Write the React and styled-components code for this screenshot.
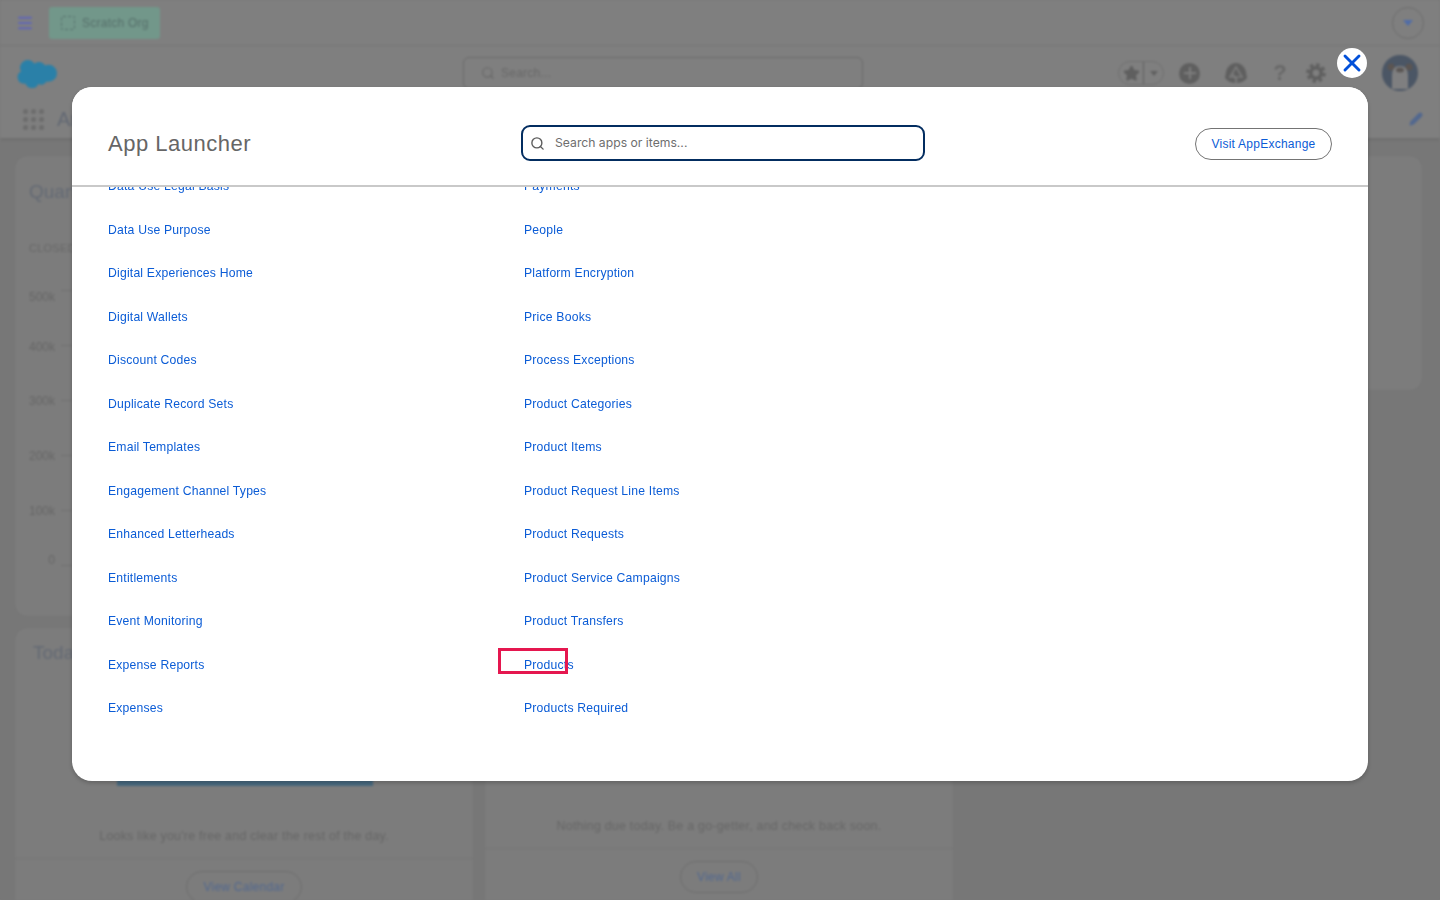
import styled, { createGlobalStyle } from "styled-components";
import { Menu, Search, Star, Plus, Pencil, X } from "lucide-react";

const leftItems = [
    "Data Use Legal Basis",
    "Data Use Purpose",
    "Digital Experiences Home",
    "Digital Wallets",
    "Discount Codes",
    "Duplicate Record Sets",
    "Email Templates",
    "Engagement Channel Types",
    "Enhanced Letterheads",
    "Entitlements",
    "Event Monitoring",
    "Expense Reports",
    "Expenses",
];

const rightItems = [
    "Payments",
    "People",
    "Platform Encryption",
    "Price Books",
    "Process Exceptions",
    "Product Categories",
    "Product Items",
    "Product Request Line Items",
    "Product Requests",
    "Product Service Campaigns",
    "Product Transfers",
    "Products",
    "Products Required",
];

const ticks = [
    { label: "500k", shift: 6 },
    { label: "400k", shift: 1 },
    { label: "300k", shift: 0 },
    { label: "200k", shift: 0 },
    { label: "100k", shift: 0 },
    { label: "0", shift: -6 },
];

const Cloud = () => (
    <svg width="41" height="30" viewBox="0 0 41 30">
        <path
            fill="#2a80a8"
            d="M17 6a7 7 0 0 1 5-2 7 7 0 0 1 6 3.500a8 8 0 0 1 3.500-.8 8.500 8.500 0 0 1 0 17 8 8 0 0 1-2-.2 6 6 0 0 1-8 2.500 7 7 0 0 1-13-.5 6 6 0 0 1-1.500.2 6.500 6.500 0 0 1-3-12.200 7.500 7.500 0 0 1 13.500-7.500z"
        />
    </svg>
);

const Trailhead = () => (
    <svg width="24" height="22" viewBox="0 0 24 22">
        <path fill="#5f5f5f" d="M12 1 C17 1 21 5 22 10 L23 16 C20 20 16 21 12 21 C8 21 4 20 1 16 L2 10 C3 5 7 1 12 1Z" />
        <path fill="none" stroke="#7c7c7c" strokeWidth="1.600" d="M12 5 L18 15 L6 15 Z M12 15 L12 21 M8 11 L13 19" />
    </svg>
);

const Gear = () => (
    <svg width="20" height="20" viewBox="0 0 20 20">
        <circle cx="10" cy="10" r="8.300" fill="none" stroke="#5f5f5f" strokeWidth="3" strokeDasharray="3.500 3" />
        <circle cx="10" cy="10" r="5.200" fill="none" stroke="#5f5f5f" strokeWidth="3.600" />
    </svg>
);

const Bear = () => (
    <svg width="36" height="36" viewBox="0 0 36 36">
        <circle cx="18" cy="18" r="18" fill="#4b5665" />
        <circle cx="9" cy="12" r="3.500" fill="#5b5552" />
        <circle cx="27" cy="12" r="3.500" fill="#5b5552" />
        <path fill="#7f7f80" d="M10 34 V21 C10 14 13 11 18 11 C23 11 26 14 26 21 V34Z" />
        <ellipse cx="18" cy="15" rx="4" ry="2.500" fill="#5a5654" />
    </svg>
);

const App = () => {
    return (
        <>
            <GlobalStyle />
            <Page>
                <TopBar>
                    <MenuButton><Menu size={18} strokeWidth={2.500} /></MenuButton>
                    <OrgPill>
                        <OrgMark />
                        Scratch Org
                    </OrgPill>
                    <CaretCircle><CaretDown /></CaretCircle>
                </TopBar>
                <GlobalHeader>
                    <LogoSlot><Cloud /></LogoSlot>
                    <PageSearch>
                        <Search size={14} />
                        Search...
                    </PageSearch>
                    <HeaderTools>
                        <FavoriteGroup>
                            <FavoriteStar><Star size={17} fill="#5f5f5f" /></FavoriteStar>
                            <FavoriteCaret><CaretSmall /></FavoriteCaret>
                        </FavoriteGroup>
                        <AddCircle><Plus size={18} strokeWidth={3} /></AddCircle>
                        <Trailhead />
                        <HelpGlyph>?</HelpGlyph>
                        <GearSlot><Gear /></GearSlot>
                        <Avatar><Bear /></Avatar>
                    </HeaderTools>
                </GlobalHeader>
                <NavRow>
                    <Waffle>
                        {Array.from({ length: 9 }, (_, i) => <Dot key={i} />)}
                    </Waffle>
                    <NavTitle>Analytics</NavTitle>
                    <EditButton><Pencil size={14} fill="#52688f" /></EditButton>
                </NavRow>
                <Board>
                    <LeftStack>
                        <ChartCard>
                            <CardTitle>Quarterly Performance</CardTitle>
                            <ChartCaption>CLOSED</ChartCaption>
                            <Chart>
                                {ticks.map((t) => (
                                    <ChartRow key={t.label}>
                                        <ChartLabel $shift={t.shift}>{t.label}</ChartLabel>
                                        <ChartTick />
                                    </ChartRow>
                                ))}
                            </Chart>
                        </ChartCard>
                        <TodayRow>
                            <TodayCard $width={458}>
                                <TodayTitle>Today's Events</TodayTitle>
                                <Art>
                                    <EventBar />
                                </Art>
                                <EmptyText $gap={43}>Looks like you're free and clear the rest of the day.</EmptyText>
                                <CardFoot><FootButton>View Calendar</FootButton></CardFoot>
                            </TodayCard>
                            <TodayCard $width={468}>
                                <TodayTitle>Today's Tasks</TodayTitle>
                                <Art />
                                <EmptyText $gap={33}>Nothing due today. Be a go-getter, and check back soon.</EmptyText>
                                <CardFoot><FootButton>View All</FootButton></CardFoot>
                            </TodayCard>
                        </TodayRow>
                    </LeftStack>
                    <SideCard />
                </Board>
            </Page>
            <Scrim>
                <Modal>
                    <CloseButton aria-label="Close">
                        <X size={28} strokeWidth={2.500} />
                    </CloseButton>
                    <ModalHeader>
                        <ModalTitle>App Launcher</ModalTitle>
                        <LauncherSearch>
                            <Search size={15} strokeWidth={2.200} />
                            <LauncherInput placeholder="Search apps or items..." />
                        </LauncherSearch>
                        <ExchangeButton>Visit AppExchange</ExchangeButton>
                    </ModalHeader>
                    <ModalBody>
                        <ItemGrid>
                            <ItemColumn>
                                {leftItems.map((item) => <ItemLink key={item}>{item}</ItemLink>)}
                            </ItemColumn>
                            <ItemColumn>
                                {rightItems.map((item) => <ItemLink key={item}>{item}</ItemLink>)}
                            </ItemColumn>
                        </ItemGrid>
                    </ModalBody>
                    <Highlight />
                </Modal>
            </Scrim>
        </>
    );
};

export default App;

const GlobalStyle = createGlobalStyle`
    html, body {
        margin: 0;
        height: 100%;
        overflow: hidden;
        background: #787878;
    }
    body, input, button {
        font-family: "Liberation Sans", Arial, sans-serif;
    }
    * {
        box-sizing: border-box;
    }
`;

/* the dimmed app behind the launcher, colours as they read through the scrim */
const Page = styled.div`
    width: 1440px;
    height: 900px;
    overflow: hidden;
    background: #777777;
    filter: blur(1.2px);
    color: #666;
`;

const TopBar = styled.div`
    height: 46px;
    display: flex;
    align-items: center;
    padding: 1px 16px 0;
    background: #7f7f7f;
    border-bottom: 1px solid #757575;
`;

const MenuButton = styled.div`
    display: flex;
    color: #6066b8;
`;

const OrgPill = styled.div`
    margin-left: 15px;
    width: 111px;
    height: 32px;
    display: flex;
    align-items: center;
    gap: 7px;
    padding-left: 12px;
    background: #72978a;
    border-radius: 3px;
    font-size: 12px;
    letter-spacing: 0.25px;
    color: #566f6a;
`;

const OrgMark = styled.span`
    width: 14px;
    height: 14px;
    border: 1.5px dashed #55706c;
    border-radius: 2px;
`;

const CaretCircle = styled.div`
    margin-left: auto;
    width: 32px;
    height: 32px;
    display: flex;
    align-items: center;
    justify-content: center;
    border: 1px solid #6d6d6d;
    border-radius: 50%;
`;

const CaretDown = styled.span`
    border-left: 5px solid transparent;
    border-right: 5px solid transparent;
    border-top: 6px solid #4f6ca8;
`;

const GlobalHeader = styled.div`
    height: 54px;
    display: flex;
    align-items: center;
    padding: 0 22px 0 17px;
    background: #7f7f7f;
`;

const LogoSlot = styled.div`
    width: 446px;
    display: flex;
`;

const PageSearch = styled.div`
    width: 400px;
    height: 32px;
    display: flex;
    align-items: center;
    gap: 6px;
    padding-left: 17px;
    border: 1px solid #6a6a6a;
    border-radius: 6px;
    background: #7f7f7f;
    font-size: 12px;
    letter-spacing: 0.25px;
    color: #686868;
`;

const HeaderTools = styled.div`
    margin-left: auto;
    display: flex;
    align-items: center;
    color: #5f5f5f;
`;

const FavoriteGroup = styled.div`
    display: flex;
    align-items: center;
    height: 24px;
    width: 46px;
    margin-right: 15px;
    border: 1px solid #707070;
    border-radius: 12px;
`;

const FavoriteStar = styled.div`
    width: 24px;
    display: flex;
    justify-content: center;
`;

const FavoriteCaret = styled.div`
    flex: 1;
    height: 100%;
    display: flex;
    align-items: center;
    justify-content: center;
    border-left: 1px solid #5f5f5f;
`;

const CaretSmall = styled.span`
    border-left: 4px solid transparent;
    border-right: 4px solid transparent;
    border-top: 5px solid #5f5f5f;
`;

const AddCircle = styled.div`
    width: 21px;
    height: 21px;
    margin-right: 24px;
    display: flex;
    align-items: center;
    justify-content: center;
    border-radius: 50%;
    background: #5f5f5f;
    color: #7c7c7c;
`;

const HelpGlyph = styled.div`
    margin-left: 22px;
    width: 20px;
    text-align: center;
    font-size: 22px;
    font-weight: bold;
    color: #686868;
`;

const GearSlot = styled.div`
    display: flex;
    margin-left: 16px;
`;

const Avatar = styled.div`
    display: flex;
    margin-left: 56px;
`;

const NavRow = styled.div`
    height: 38px;
    display: flex;
    align-items: center;
    padding: 0 17px 0 23px;
    background: #7f7f7f;
    box-shadow: 0 2px 3px rgba(0, 0, 0, 0.08);
`;

const Waffle = styled.div`
    display: grid;
    grid-template-columns: repeat(3, 5px);
    gap: 3px;
`;

const Dot = styled.span`
    width: 5px;
    height: 5px;
    border-radius: 50%;
    background: #6c6c6c;
`;

const NavTitle = styled.div`
    margin-left: 13px;
    font-size: 20px;
    color: #626873;
`;

const EditButton = styled.div`
    margin-left: auto;
    display: flex;
    color: #52688f;
`;

const Board = styled.div`
    display: flex;
    align-items: flex-start;
    gap: 20px;
    padding: 18px 18px 0 15px;
`;

const LeftStack = styled.div`
    width: 938px;
    display: flex;
    flex-direction: column;
    gap: 12px;
`;

const Card = styled.div`
    background: #7c7c7c;
    border-radius: 12px;
    box-shadow: 0 0 2px rgba(0, 0, 0, 0.06);
`;

const ChartCard = styled(Card)`
    height: 460px;
    padding: 25px 14px;
`;

const SideCard = styled(Card)`
    flex: 1;
    height: 234px;
`;

const CardTitle = styled.div`
    font-size: 19px;
    color: #646a74;
`;

const ChartCaption = styled.div`
    margin-top: 39px;
    font-size: 11px;
    letter-spacing: 0.25px;
    color: #676767;
`;

const Chart = styled.div`
    margin-top: 9px;
`;

const ChartRow = styled.div`
    height: 55px;
    display: flex;
    align-items: center;
    gap: 6px;
`;

const ChartLabel = styled.div`
    width: 26px;
    text-align: right;
    font-size: 12px;
    color: #666666;
    transform: translateY(${(p) => p.$shift}px);
`;

const ChartTick = styled.span`
    width: 60px;
    height: 1px;
    background: #6f6f6f;
`;

const TodayRow = styled.div`
    display: flex;
    gap: 12px;
`;

const TodayCard = styled(Card)`
    flex: none;
    width: ${(p) => p.$width}px;
    height: 300px;
    display: flex;
    flex-direction: column;
    padding-top: 14px;
    text-align: center;
`;

const TodayTitle = styled.div`
    padding-left: 18px;
    text-align: left;
    font-size: 19px;
    color: #646a74;
`;

const Art = styled.div`
    height: 122px;
    display: flex;
    align-items: flex-end;
    justify-content: center;
`;

const EventBar = styled.div`
    width: 256px;
    height: 7px;
    margin-left: 2px;
    background: #47687e;
`;

const EmptyText = styled.div`
    margin-top: ${(p) => p.$gap}px;
    font-size: 12.4px;
    letter-spacing: 0.25px;
    color: #666666;
`;

const CardFoot = styled.div`
    margin-top: 15px;
    padding-top: 12px;
    border-top: 1px solid #757575;
`;

const FootButton = styled.span`
    display: inline-block;
    padding: 8px 16px;
    border: 1px solid #6e6e6e;
    border-radius: 16px;
    font-size: 12px;
    letter-spacing: 0.25px;
    color: #52688f;
`;

const Scrim = styled.div`
    position: fixed;
    inset: 0;
`;

const Modal = styled.div`
    position: absolute;
    left: 72px;
    top: 87px;
    width: 1296px;
    height: 694px;
    display: flex;
    flex-direction: column;
    background: #fff;
    border-radius: 20px;
    box-shadow: 0 2px 4px rgba(0, 0, 0, 0.2);
`;

const CloseButton = styled.button`
    position: absolute;
    top: -39px;
    right: 1px;
    width: 30px;
    height: 30px;
    padding: 0;
    display: flex;
    align-items: center;
    justify-content: center;
    border: none;
    border-radius: 50%;
    background: #fff;
    color: #0250d9;
`;

const ModalHeader = styled.div`
    height: 100px;
    flex: none;
    display: flex;
    align-items: center;
    padding: 15px 36px 0;
    border-bottom: 2px solid #c9c9c9;
    position: relative;
    z-index: 1;
    background: #fff;
    border-radius: 20px 20px 0 0;
`;

const ModalTitle = styled.h2`
    width: 413px;
    margin: 0;
    font-size: 22px;
    font-weight: 400;
    letter-spacing: 0.5px;
    color: #666666;
`;

const LauncherSearch = styled.div`
    width: 404px;
    height: 36px;
    margin-top: -1px;
    display: flex;
    align-items: center;
    gap: 10px;
    padding-left: 7px;
    border: 2px solid #032d60;
    border-radius: 9px;
    color: #5c5c5c;
`;

const LauncherInput = styled.input`
    flex: 1;
    min-width: 0;
    border: none;
    outline: none;
    padding: 0 0 1px;
    font-family: Inter, "Liberation Sans", sans-serif;
    font-size: 12.2px;
    background: transparent;

    &::placeholder {
        color: #6e6e6e;
        opacity: 1;
    }
`;

const ExchangeButton = styled.button`
    margin-left: auto;
    margin-top: 1px;
    width: 137px;
    height: 32px;
    padding: 0;
    border: 1px solid #747474;
    border-radius: 16px;
    background: #fff;
    font-size: 12px;
    letter-spacing: 0.25px;
    color: #0b5cd6;
`;

const ModalBody = styled.div`
    flex: 1;
    min-height: 0;
    overflow: hidden;
    padding: 0 36px;
`;

const ItemGrid = styled.div`
    display: grid;
    grid-template-columns: 416px 416px;
    margin-top: -22.5px;
`;

const ItemColumn = styled.div`
    display: flex;
    flex-direction: column;
`;

const ItemLink = styled.a`
    height: 43.5px;
    display: flex;
    align-items: center;
    font-size: 12.2px;
    letter-spacing: 0.2px;
    color: #0b5cd6;
    cursor: pointer;
`;

const Highlight = styled.div`
    position: absolute;
    left: 426px;
    top: 561px;
    width: 70px;
    height: 26px;
    border: 3px solid #e5174f;
    pointer-events: none;
`;
